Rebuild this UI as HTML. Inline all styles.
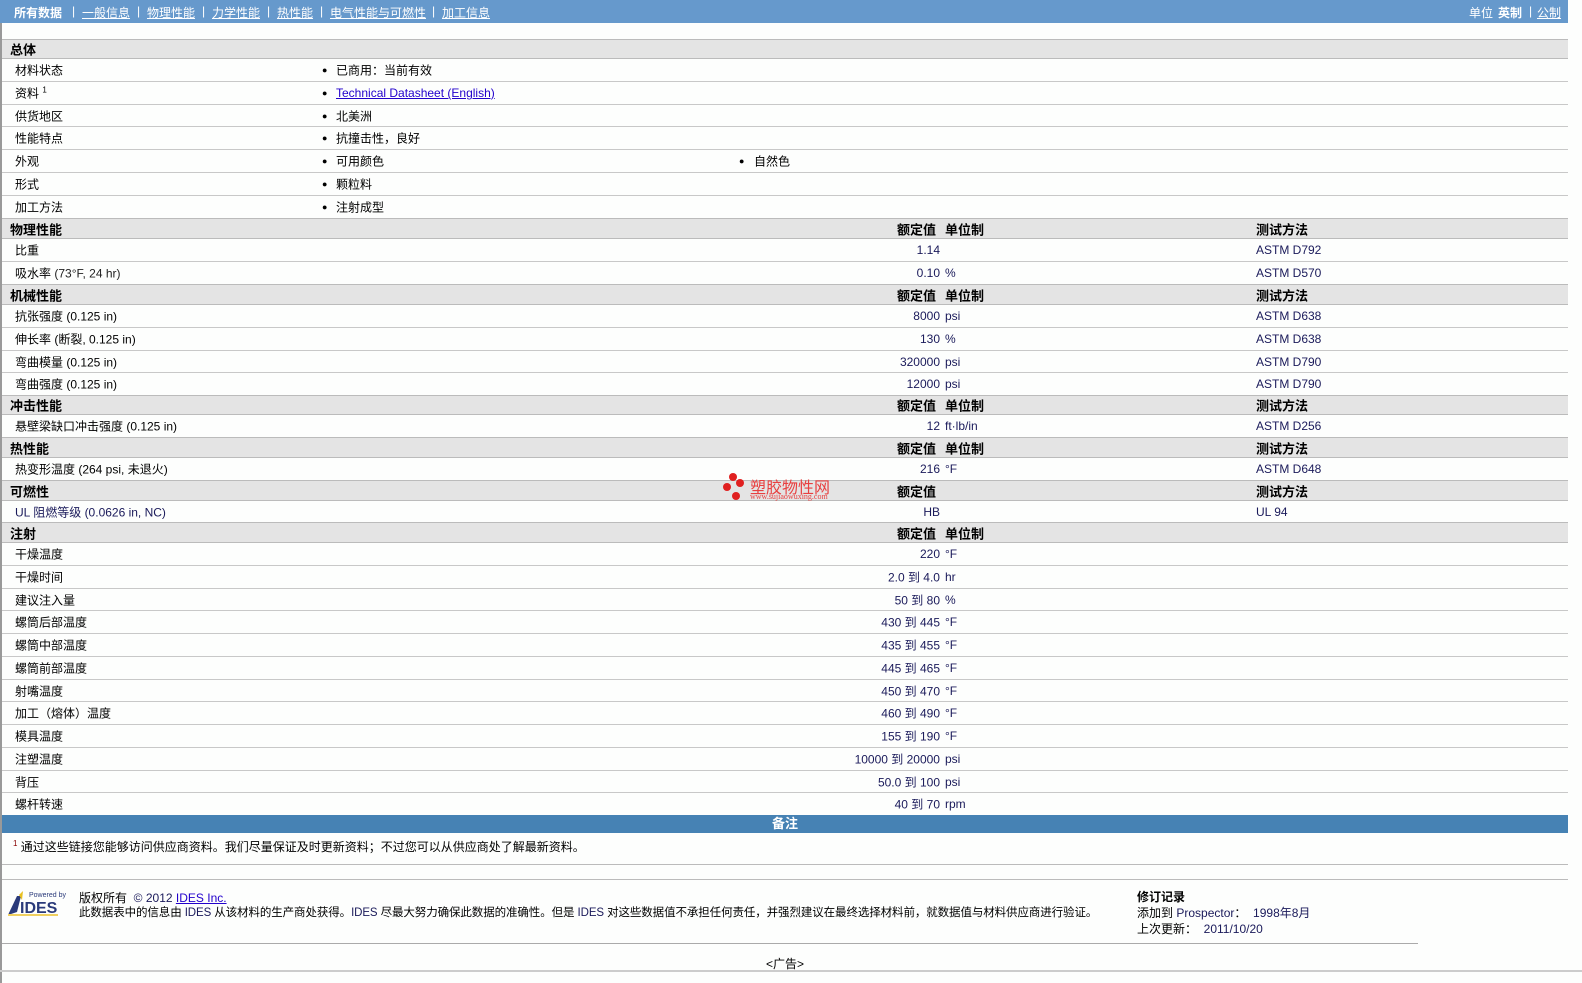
<!DOCTYPE html>
<html><head><meta charset="utf-8">
<style>
*{margin:0;padding:0;box-sizing:border-box}
body{width:1582px;height:983px;background:#fdfefd;font-family:"Liberation Sans","Noto Sans CJK SC",sans-serif;font-size:12px;color:#000;position:relative;overflow:hidden}
.a{position:absolute;white-space:nowrap}
#nav{position:absolute;left:0;top:0;width:1568px;height:23px;background:#6699cc;color:#fff;font-size:12px}
#nav span{position:absolute;top:4px}
#nav u{text-decoration:underline}
.lb{position:absolute;left:0;top:0;width:2px;height:983px;background:#999}
.rw{position:absolute;left:2px;width:1566px;border-bottom:1px solid #c8c8c8}
.hd{position:absolute;left:2px;width:1566px;background:#e4e4e4;border-top:1px solid #bbb;border-bottom:1px solid #bbb;font-weight:bold;font-size:13px}
.rw span,.hd span{position:absolute;top:50%;transform:translateY(-50%);white-space:nowrap}
.v{color:#222}
.num{text-align:right;width:200px;left:738px}
.bul{left:320px;font-size:9px}
.m{color:#1a1a5a}
</style></head><body>
<div class="lb"></div>
<div id="nav">
<span style="left:14px;font-weight:bold">所有数据</span>
<span style="left:72px">|</span><span style="left:82px"><u>一般信息</u></span>
<span style="left:137px">|</span><span style="left:147px"><u>物理性能</u></span>
<span style="left:202px">|</span><span style="left:212px"><u>力学性能</u></span>
<span style="left:267px">|</span><span style="left:277px"><u>热性能</u></span>
<span style="left:320px">|</span><span style="left:330px"><u>电气性能与可燃性</u></span>
<span style="left:432px">|</span><span style="left:442px"><u>加工信息</u></span>
<span style="left:1469px">单位</span><span style="left:1498px;font-weight:bold">英制</span><span style="left:1529px">|</span><span style="left:1537px"><u>公制</u></span>
</div>

<div class="hd" style="top:39px;height:20px"><span style="left:8px">总体</span></div>
<div class="rw" style="top:59px;height:23px"><span style="left:13px">材料状态</span><span class="bul">●</span><span style="left:334px">已商用：当前有效</span></div>
<div class="rw" style="top:82px;height:23px"><span style="left:13px">资料 <sup style="font-size:8px">1</sup></span><span class="bul">●</span><span style="left:334px;color:#2200cc;text-decoration:underline">Technical Datasheet (English)</span></div>
<div class="rw" style="top:105px;height:22px"><span style="left:13px">供货地区</span><span class="bul">●</span><span style="left:334px">北美洲</span></div>
<div class="rw" style="top:127px;height:23px"><span style="left:13px">性能特点</span><span class="bul">●</span><span style="left:334px">抗撞击性，良好</span></div>
<div class="rw" style="top:150px;height:23px"><span style="left:13px">外观</span><span class="bul">●</span><span style="left:334px">可用颜色</span><span style="left:737px;font-size:9px">●</span><span style="left:752px">自然色</span></div>
<div class="rw" style="top:173px;height:23px"><span style="left:13px">形式</span><span class="bul">●</span><span style="left:334px">颗粒料</span></div>
<div class="rw" style="top:196px;height:22px;border-bottom:none"><span style="left:13px">加工方法</span><span class="bul">●</span><span style="left:334px">注射成型</span></div>

<div class="hd" style="top:218px;height:21px"><span style="left:8px">物理性能</span><span style="left:895px">额定值</span><span style="left:943px">单位制</span><span style="left:1254px">测试方法</span></div>
<div class="rw" style="top:239px;height:23px"><span style="left:13px">比重</span><span class="num m">1.14</span><span class="m" style="left:1254px">ASTM D792</span></div>
<div class="rw" style="top:262px;height:22px;border-bottom:none"><span style="left:13px">吸水率 <span class="v" style="position:static;transform:none">(73°F, 24 hr)</span></span><span class="num m">0.10</span><span class="m" style="left:943px">%</span><span class="m" style="left:1254px">ASTM D570</span></div>

<div class="hd" style="top:284px;height:21px"><span style="left:8px">机械性能</span><span style="left:895px">额定值</span><span style="left:943px">单位制</span><span style="left:1254px">测试方法</span></div>
<div class="rw" style="top:305px;height:23px"><span style="left:13px">抗张强度 (0.125 in)</span><span class="num m">8000</span><span class="m" style="left:943px">psi</span><span class="m" style="left:1254px">ASTM D638</span></div>
<div class="rw" style="top:328px;height:23px"><span style="left:13px">伸长率 (断裂, 0.125 in)</span><span class="num m">130</span><span class="m" style="left:943px">%</span><span class="m" style="left:1254px">ASTM D638</span></div>
<div class="rw" style="top:351px;height:22px"><span style="left:13px">弯曲模量 (0.125 in)</span><span class="num m">320000</span><span class="m" style="left:943px">psi</span><span class="m" style="left:1254px">ASTM D790</span></div>
<div class="rw" style="top:373px;height:22px;border-bottom:none"><span style="left:13px">弯曲强度 (0.125 in)</span><span class="num m">12000</span><span class="m" style="left:943px">psi</span><span class="m" style="left:1254px">ASTM D790</span></div>

<div class="hd" style="top:395px;height:20px"><span style="left:8px">冲击性能</span><span style="left:895px">额定值</span><span style="left:943px">单位制</span><span style="left:1254px">测试方法</span></div>
<div class="rw" style="top:415px;height:22px;border-bottom:none"><span style="left:13px">悬壁梁缺口冲击强度 (0.125 in)</span><span class="num m">12</span><span class="m" style="left:943px">ft·lb/in</span><span class="m" style="left:1254px">ASTM D256</span></div>

<div class="hd" style="top:437px;height:21px"><span style="left:8px">热性能</span><span style="left:895px">额定值</span><span style="left:943px">单位制</span><span style="left:1254px">测试方法</span></div>
<div class="rw" style="top:458px;height:22px;border-bottom:none"><span style="left:13px">热变形温度 (264 psi, 未退火)</span><span class="num m">216</span><span class="m" style="left:943px">°F</span><span class="m" style="left:1254px">ASTM D648</span></div>

<div class="hd" style="top:480px;height:21px"><span style="left:8px">可燃性</span><span style="left:895px">额定值</span><span style="left:1254px">测试方法</span></div>
<div class="rw" style="top:501px;height:21px;border-bottom:none"><span style="left:13px;color:#1a1a5a">UL 阻燃等级 (0.0626 in, NC)</span><span class="num m">HB</span><span class="m" style="left:1254px">UL 94</span></div>

<div class="hd" style="top:522px;height:21px"><span style="left:8px">注射</span><span style="left:895px">额定值</span><span style="left:943px">单位制</span></div>
<div class="rw" style="top:543px;height:23px"><span style="left:13px">干燥温度</span><span class="num m">220</span><span class="m" style="left:943px">°F</span></div>
<div class="rw" style="top:566px;height:23px"><span style="left:13px">干燥时间</span><span class="num m">2.0 到 4.0</span><span class="m" style="left:943px">hr</span></div>
<div class="rw" style="top:589px;height:22px"><span style="left:13px">建议注入量</span><span class="num m">50 到 80</span><span class="m" style="left:943px">%</span></div>
<div class="rw" style="top:611px;height:23px"><span style="left:13px">螺筒后部温度</span><span class="num m">430 到 445</span><span class="m" style="left:943px">°F</span></div>
<div class="rw" style="top:634px;height:23px"><span style="left:13px">螺筒中部温度</span><span class="num m">435 到 455</span><span class="m" style="left:943px">°F</span></div>
<div class="rw" style="top:657px;height:23px"><span style="left:13px">螺筒前部温度</span><span class="num m">445 到 465</span><span class="m" style="left:943px">°F</span></div>
<div class="rw" style="top:680px;height:22px"><span style="left:13px">射嘴温度</span><span class="num m">450 到 470</span><span class="m" style="left:943px">°F</span></div>
<div class="rw" style="top:702px;height:23px"><span style="left:13px">加工（熔体）温度</span><span class="num m">460 到 490</span><span class="m" style="left:943px">°F</span></div>
<div class="rw" style="top:725px;height:23px"><span style="left:13px">模具温度</span><span class="num m">155 到 190</span><span class="m" style="left:943px">°F</span></div>
<div class="rw" style="top:748px;height:23px"><span style="left:13px">注塑温度</span><span class="num m">10000 到 20000</span><span class="m" style="left:943px">psi</span></div>
<div class="rw" style="top:771px;height:22px"><span style="left:13px">背压</span><span class="num m">50.0 到 100</span><span class="m" style="left:943px">psi</span></div>
<div class="rw" style="top:793px;height:22px;border-bottom:none"><span style="left:13px">螺杆转速</span><span class="num m">40 到 70</span><span class="m" style="left:943px">rpm</span></div>

<div class="a" style="left:2px;top:815px;width:1566px;height:18px;background:#4682b4;color:#fff;font-weight:bold;font-size:13px;text-align:center;line-height:17px">备注</div>
<div class="a" style="left:13px;top:838px"><sup style="font-size:8px;color:#800">1</sup> 通过这些链接您能够访问供应商资料。我们尽量保证及时更新资料；不过您可以从供应商处了解最新资料。</div>
<div class="a" style="left:2px;top:864px;width:1566px;height:1px;background:#bbb"></div>
<div class="a" style="left:2px;top:879px;width:1566px;height:1px;background:#bbb"></div>

<div class="a" style="left:7px;top:890px;width:64px;height:26px">
<svg width="64" height="26" viewBox="0 0 64 26"><path d="M1 25 L10 6 L14 6 L10 22 Z" fill="#2a3a7a"/><path d="M12 5 L16 1 L15 10 Z" fill="#e8c020"/><text x="22" y="7" font-size="7" fill="#2a3a7a" font-family="Liberation Sans">Powered by</text><text x="13" y="23" font-size="16" font-weight="bold" fill="#2a3a7a" font-family="Liberation Sans">IDES</text><rect x="1" y="24" width="50" height="2" fill="#f0d060"/></svg>
</div>
<div class="a" style="left:79px;top:889px">版权所有 &nbsp;<span class="m">© 2012</span> <span style="color:#2200cc;text-decoration:underline">IDES Inc.</span></div>
<div class="a" style="left:79px;top:904px;font-size:11.5px;letter-spacing:-0.1px">此数据表中的信息由 <span class="m">IDES</span> 从该材料的生产商处获得。<span class="m">IDES</span> 尽最大努力确保此数据的准确性。但是 <span class="m">IDES</span> 对这些数据值不承担任何责任，并强烈建议在最终选择材料前，就数据值与材料供应商进行验证。</div>
<div class="a" style="left:1137px;top:888px;font-weight:bold">修订记录</div>
<div class="a" style="left:1137px;top:904px">添加到 <span class="m">Prospector</span>： &nbsp;<span class="m">1998年8月</span></div>
<div class="a" style="left:1137px;top:920px">上次更新： &nbsp;<span class="m">2011/10/20</span></div>
<div class="a" style="left:2px;top:943px;width:1416px;height:1px;background:#aaa"></div>
<div class="a" style="left:766px;top:955px">&lt;广告&gt;</div>
<div class="a" style="left:0;top:970px;width:1582px;height:2px;background:#ccc"></div>

<div class="a" style="left:722px;top:470px;width:130px;height:34px">
<svg width="24" height="34" style="position:absolute;left:0;top:0"><circle cx="11" cy="7" r="4" fill="#e02020"/><circle cx="18" cy="13" r="4" fill="#e02020"/><circle cx="5" cy="17" r="4" fill="#e02020"/><circle cx="14" cy="26" r="4" fill="#e02020"/></svg>
<div class="a" style="left:28px;top:4px;font-size:16px;color:#e84040">塑胶物性网</div>
<div class="a" style="left:28px;top:22px;font-size:8px;color:#e84040;font-family:'Liberation Serif',serif">www.sujiaowuxing.com</div>
</div>
</body></html>
